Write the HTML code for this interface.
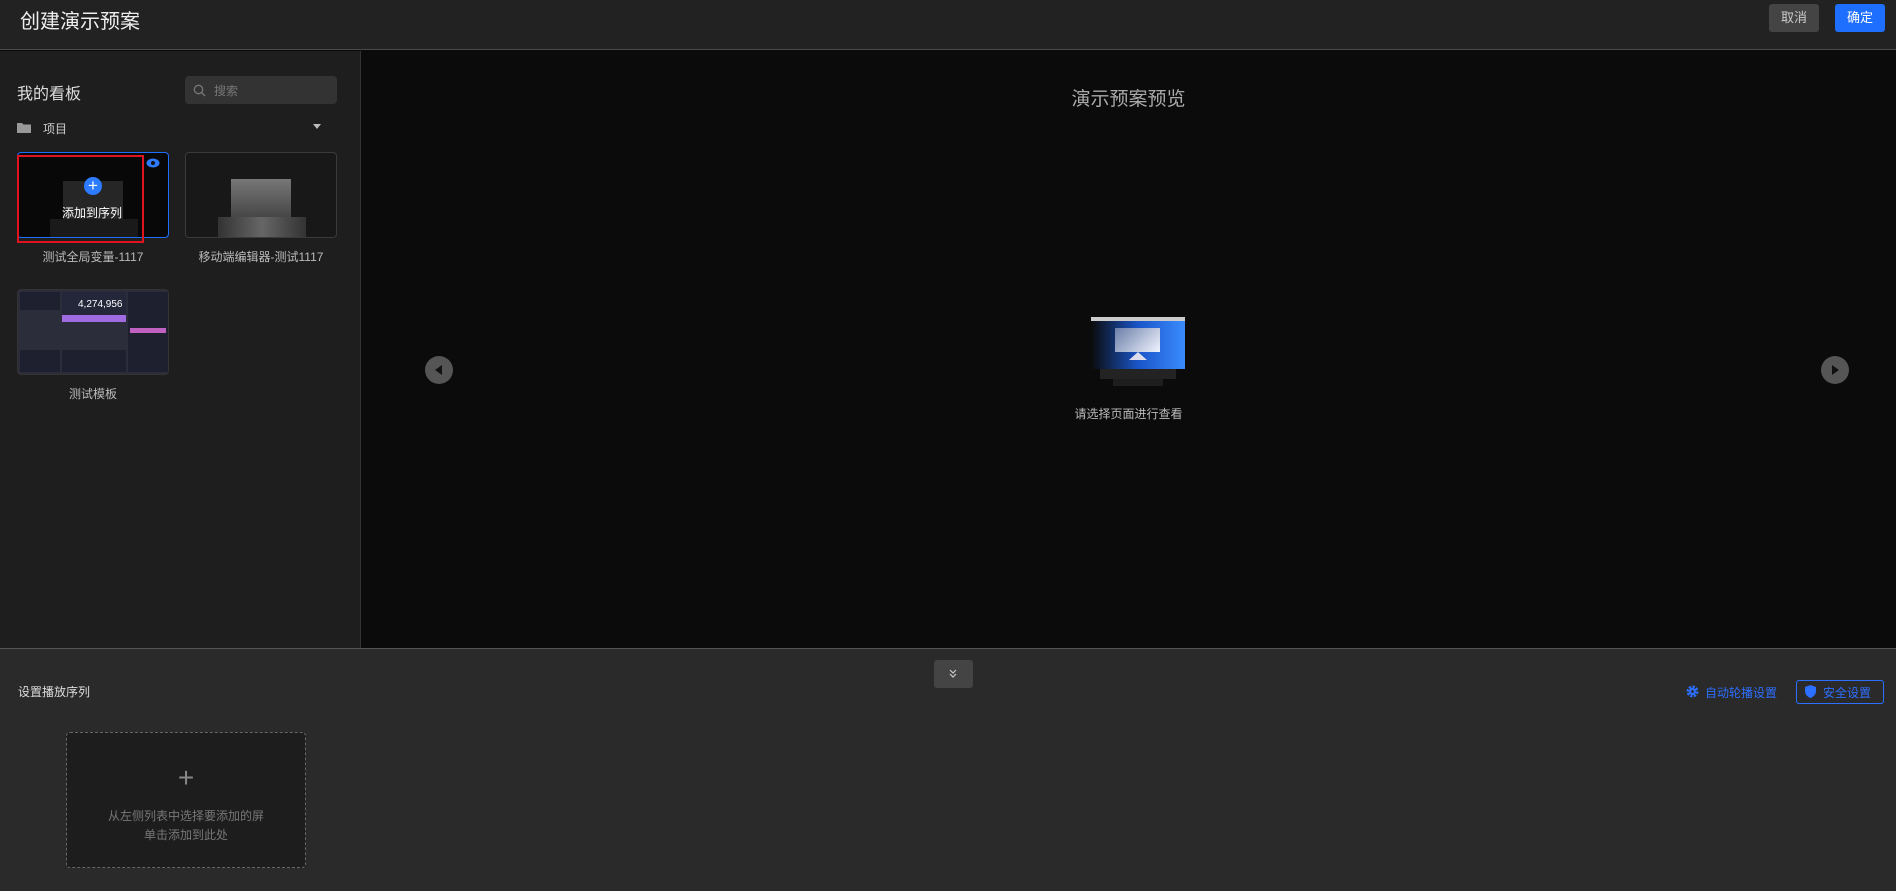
<!DOCTYPE html>
<html><head><meta charset="utf-8"><style>
*{margin:0;padding:0;box-sizing:border-box}
body{width:1896px;height:891px;overflow:hidden;background:#0b0b0b;font-family:"Liberation Sans","Noto Sans CJK SC",sans-serif;position:relative;color:#ddd}
.abs{position:absolute}
.hdr{left:0;top:0;width:1896px;height:50px;background:#222;border-bottom:1px solid #4a4a4a}
.btn{top:4px;height:28px;width:50px;border-radius:3px;font-size:13px;line-height:28px;text-align:center}
.left{left:0;top:51px;width:361px;height:597px;background:#1e1e1e;border-right:1px solid #333}
.card{width:152px;height:86px;border:1px solid #3a3a3a;border-radius:4px;background:#141414;overflow:hidden}
.lbl{font-size:12px;color:#bbb;width:152px;text-align:center}
.bot{left:0;top:648px;width:1896px;height:243px;background:#2a2a2a;border-top:1px solid #555}
</style></head><body>
<div class="abs hdr"></div>
<div class="abs" style="left:20px;top:5px;font-size:20px;color:#eee">创建演示预案</div>
<div class="abs btn" style="left:1769px;background:#444;color:#ccc">取消</div>
<div class="abs btn" style="left:1835px;background:#1f6fff;color:#fff">确定</div>

<div class="abs left"></div>
<div class="abs" style="left:17px;top:80px;font-size:16px;color:#ddd">我的看板</div>
<div class="abs" style="left:185px;top:76px;width:152px;height:28px;background:#333;border-radius:4px"></div>
<svg class="abs" style="left:193px;top:84px" width="13" height="13" viewBox="0 0 13 13"><circle cx="5.5" cy="5.5" r="4.2" fill="none" stroke="#777" stroke-width="1.3"/><path d="M8.5 8.5L12 12" stroke="#777" stroke-width="1.3"/></svg>
<div class="abs" style="left:214px;top:82px;font-size:12px;color:#777">搜索</div>
<svg class="abs" style="left:17px;top:122px" width="14" height="11"><path d="M0 1h5l1.5 1.5H14V11H0z" fill="#999"/></svg>
<div class="abs" style="left:43px;top:120px;font-size:12px;color:#ccc">项目</div>
<div class="abs" style="left:313px;top:124px;width:0;height:0;border-left:4px solid transparent;border-right:4px solid transparent;border-top:5px solid #bbb"></div>

<div class="abs card" style="left:17px;top:152px;border-color:#1f6fff;background:#080808">
 <div class="abs" style="left:45px;top:28px;width:60px;height:40px;background:#262626"></div>
 <div class="abs" style="left:32px;top:66px;width:88px;height:22px;background:#1a1a1a"></div>
</div>
<div class="abs" style="left:17px;top:155px;width:127px;height:88px;border:2px solid #e0141e"></div>
<div class="abs" style="left:84px;top:177px;width:18px;height:18px;border-radius:50%;background:#2d7bff;color:#fff;font-size:17px;line-height:17px;text-align:center">+</div>
<div class="abs" style="left:62px;top:204px;font-size:12px;color:#fff">添加到序列</div>
<svg class="abs" style="left:146px;top:158px" width="14" height="10"><ellipse cx="7" cy="5" rx="6.5" ry="4.5" fill="#2d7bff"/><circle cx="7" cy="5" r="2" fill="#111"/></svg>
<div class="abs lbl" style="left:17px;top:248px">测试全局变量-1117</div>

<div class="abs card" style="left:185px;top:152px;background:#181818">
 <div class="abs" style="left:45px;top:26px;width:60px;height:40px;background:linear-gradient(#777,#444)"></div>
 <div class="abs" style="left:32px;top:64px;width:88px;height:24px;background:linear-gradient(90deg,#333,#666,#333)"></div>
</div>
<div class="abs lbl" style="left:185px;top:248px">移动端编辑器-测试1117</div>

<div class="abs card" style="left:17px;top:289px;background:#2b2d3a;border-color:#333">
 <div class="abs" style="left:2px;top:2px;width:40px;height:18px;background:#1e2030"></div>
 <div class="abs" style="left:44px;top:2px;width:64px;height:30px;background:#24263a"></div>
 <div class="abs" style="left:44px;top:25px;width:64px;height:7px;background:#a06ae0"></div>
 <div class="abs" style="left:110px;top:2px;width:40px;height:80px;background:#1e2030"></div>
 <div class="abs" style="left:112px;top:38px;width:36px;height:5px;background:#c060c0"></div>
 <div class="abs" style="left:2px;top:60px;width:40px;height:22px;background:#1e2030"></div>
 <div class="abs" style="left:44px;top:60px;width:64px;height:22px;background:#1e2030"></div>
 <div class="abs" style="left:60px;top:9px;font-size:10px;color:#fff">4,274,956</div>
</div>
<div class="abs lbl" style="left:17px;top:385px">测试模板</div>

<div class="abs" style="left:361px;width:1535px;top:84px;text-align:center;font-size:19px;color:#aaa">演示预案预览</div>
<div class="abs" style="left:1091px;top:317px;width:94px;height:52px;background:linear-gradient(90deg,#0b0b0b,#1a55c8 50%,#3a8bff);border-top:4px solid #ccc"></div>
<div class="abs" style="left:1115px;top:328px;width:45px;height:24px;background:linear-gradient(135deg,#6b7fa8,#f0f4ff)"></div>
<div class="abs" style="left:1129px;top:352px;width:0;height:0;border-left:9px solid transparent;border-right:9px solid transparent;border-bottom:8px solid #dde"></div>
<div class="abs" style="left:1100px;top:369px;width:76px;height:10px;background:#232323"></div>
<div class="abs" style="left:1113px;top:379px;width:50px;height:7px;background:#1e1e1e"></div>
<div class="abs" style="left:361px;width:1535px;top:405px;text-align:center;font-size:12px;color:#bbb">请选择页面进行查看</div>
<svg class="abs" style="left:425px;top:356px" width="28" height="28"><circle cx="14" cy="14" r="14" fill="#555"/><path d="M10 14l7-5v10z" fill="#111"/></svg>
<svg class="abs" style="left:1821px;top:356px" width="28" height="28"><circle cx="14" cy="14" r="14" fill="#555"/><path d="M18 14l-7-5v10z" fill="#111"/></svg>

<div class="abs bot"></div>
<div class="abs" style="left:934px;top:660px;width:39px;height:28px;background:#444;border-radius:3px"></div>
<svg class="abs" style="left:948px;top:669px" width="10" height="10"><path d="M2 1l3 3 3-3M2 5l3 3 3-3" fill="none" stroke="#ccc" stroke-width="1.2"/></svg>
<div class="abs" style="left:18px;top:683px;font-size:12px;color:#ddd">设置播放序列</div>
<div class="abs" style="left:66px;top:732px;width:240px;height:136px;border:1px dashed #666;border-radius:4px;background:#1d1d1d"></div>
<div class="abs" style="left:66px;top:762px;width:240px;text-align:center;font-size:28px;color:#888;font-weight:300">+</div>
<div class="abs" style="left:66px;top:807px;width:240px;text-align:center;font-size:12px;color:#777;line-height:19px">从左侧列表中选择要添加的屏<br>单击添加到此处</div>
<svg class="abs" style="left:1686px;top:685px" width="13" height="13" viewBox="0 0 13 13"><circle cx="6.5" cy="6.5" r="4.5" fill="none" stroke="#2d6fff" stroke-width="3" stroke-dasharray="2.2 1.3"/><circle cx="6.5" cy="6.5" r="3.5" fill="#2d6fff"/><circle cx="6.5" cy="6.5" r="1.4" fill="#2a2a2a"/></svg>
<div class="abs" style="left:1705px;top:684px;font-size:12px;color:#2d6fff">自动轮播设置</div>
<div class="abs" style="left:1796px;top:680px;width:88px;height:24px;border:1px solid #2d6fff;border-radius:3px"></div>
<svg class="abs" style="left:1805px;top:685px" width="11" height="13"><path d="M5.5 0L11 2v4c0 4-3 6-5.5 7C3 12 0 10 0 6V2z" fill="#2d6fff"/></svg>
<div class="abs" style="left:1823px;top:684px;font-size:12px;color:#2d6fff">安全设置</div>
</body></html>
